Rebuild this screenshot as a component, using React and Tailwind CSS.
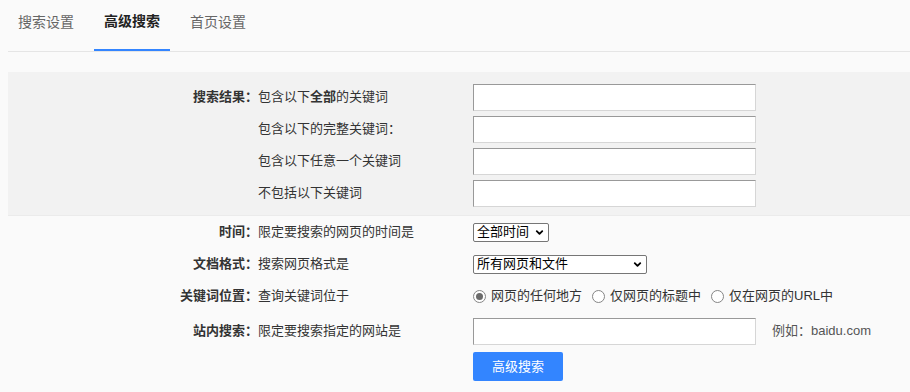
import { ChevronDown } from 'lucide-react'

const font = { fontFamily: '"Liberation Sans", "Noto Sans CJK SC", sans-serif' }

function TextBox() {
  return (
    <div className="w-[283px] h-[27px] bg-white border border-t-[#999] border-l-[#999] border-b-[#d6d6d6] border-r-[#d6d6d6]" />
  )
}

function FakeSelect({ value, width }) {
  return (
    <div className={`${width} h-[19px] flex items-center justify-between bg-white border border-[#767676] rounded-[2px] pl-[3px] pr-[3px] text-[13px] text-black`}>
      <span>{value}</span>
      <ChevronDown className="size-[11px]" strokeWidth={4} />
    </div>
  )
}

function Radio({ checked, label }) {
  return (
    <label className="flex items-center gap-[5px]">
      <span className="w-[13px] h-[13px] rounded-full border border-[#858585] bg-white flex items-center justify-center">
        {checked && <span className="w-[7px] h-[7px] rounded-full bg-[#6b6b6b]" />}
      </span>
      <span>{label}</span>
    </label>
  )
}

function Row({ label, desc, children, className = 'h-8' }) {
  return (
    <div className={`flex items-center ${className}`}>
      <div className="w-[250px] text-right font-bold text-[#333]">{label}</div>
      <div className="w-[215px] text-[#333]">{desc}</div>
      {children}
    </div>
  )
}

export default function App() {
  const tabs = ['搜索设置', '高级搜索', '首页设置']

  return (
    <div className="w-[910px] h-[392px] bg-[#fafafa] overflow-hidden text-[13px]" style={font}>
      {/* Tabs */}
      <div className="ml-2 flex gap-[10px] border-b border-[#e5e5e5] h-[52px]">
        {tabs.map((t, i) => (
          <div
            key={t}
            className={`w-[76px] flex items-center justify-center text-[14px] pb-[6px] ${
              i === 1
                ? 'font-bold text-[#222] border-b-2 border-[#3385ff]'
                : 'text-[#666]'
            }`}
          >
            {t}
          </div>
        ))}
      </div>

      {/* Keyword band */}
      <div className="ml-2 mt-5 bg-[#f2f2f2] pt-[9px] pb-[6px] border-b border-[#ebebeb]">
        <Row label="搜索结果：" desc={<>包含以下<b>全部</b>的关键词</>}>
          <TextBox />
        </Row>
        <Row label="" desc="包含以下的完整关键词：">
          <TextBox />
        </Row>
        <Row label="" desc="包含以下任意一个关键词">
          <TextBox />
        </Row>
        <Row label="" desc="不包括以下关键词">
          <TextBox />
        </Row>
      </div>

      {/* Other options */}
      <div className="ml-2">
        <Row label="时间：" desc="限定要搜索的网页的时间是">
          <FakeSelect value="全部时间" width="w-[76px]" />
        </Row>
        <Row label="文档格式：" desc="搜索网页格式是">
          <FakeSelect value="所有网页和文件" width="w-[174px]" />
        </Row>
        <Row label="关键词位置：" desc="查询关键词位于">
          <div className="flex items-center gap-[10px] text-[#333]">
            <Radio checked label="网页的任何地方" />
            <Radio label="仅网页的标题中" />
            <Radio label="仅在网页的URL中" />
          </div>
        </Row>
        <Row label="站内搜索：" desc="限定要搜索指定的网站是" className="h-9 pt-[2px]">
          <TextBox />
          <span className="ml-4 text-[#555]">例如：baidu.com</span>
        </Row>
        <div className="pl-[465px] mt-1">
          <button className="w-[90px] h-[29px] bg-[#3385ff] text-white rounded-[2px] text-[13px]">
            高级搜索
          </button>
        </div>
      </div>
    </div>
  )
}
